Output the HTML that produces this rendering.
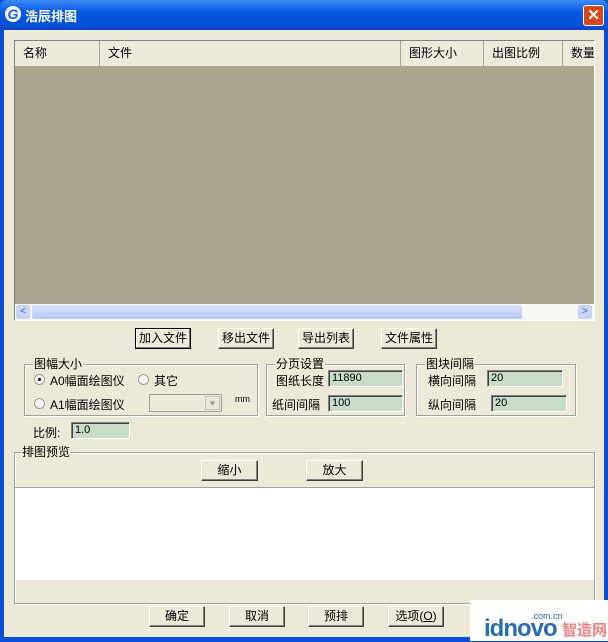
<!DOCTYPE html><html><head><meta charset="utf-8"><style>
*{margin:0;padding:0;box-sizing:border-box}
body{width:608px;height:641px;overflow:hidden;background:#0A4FD6;font-family:"Liberation Sans","Noto Sans CJK SC",sans-serif;font-size:12px;color:#000;position:relative}
.a{position:absolute}
.title{left:0;top:0;width:608px;height:30px;background:linear-gradient(#3A8CF8,#0858E0 40%,#0451DA 80%,#0A46C4);border-radius:7px 7px 0 0}
.client{left:4px;top:30px;width:600px;height:607px;background:#ECE9D8}
.btn{position:absolute;height:21px;border:1px solid #fff;border-right-color:#404040;border-bottom-color:#404040;box-shadow:inset -1px -1px 0 #808080;background:#ECE9D8;text-align:center;line-height:19px;font-size:12px}
.grp{position:absolute;border:1px solid #A0A0A0;box-shadow:1px 1px 0 #fff,inset 1px 1px 0 #fff}
.lg{position:absolute;top:-8px;left:8px;background:#ECE9D8;padding:0 1px;line-height:14px}
.inp{position:absolute;height:17px;background:#C8DCC8;border:1px solid #808080;border-right-color:#fff;border-bottom-color:#fff;box-shadow:inset 1px 1px 0 #404040;font-family:"Liberation Sans",sans-serif;font-size:11px;line-height:15px;padding-left:3px}
.rad{position:absolute;width:11px;height:11px;border-radius:50%;background:#f4f4f0;border:1px solid #9a9a9a}
.hd{position:absolute;top:0;height:25px;line-height:25px;padding-left:8px;border-right:1px solid #A8A48E;background:#EBEADB}
</style></head><body>
<div class="a title"></div>
<div class="a" style="left:5px;top:6px;width:16px;height:16px;border-radius:50%;background:#fff;color:#1060e0;font-weight:bold;font-style:italic;font-size:14px;line-height:16px;text-align:center">G</div>
<div class="a" style="left:25px;top:6px;color:#fff;font-weight:bold;font-size:13px">浩辰排图</div>
<div class="a" style="left:583px;top:5px;width:21px;height:21px;background:#D5481E;border:1px solid #fff;border-radius:3px;color:#fff;font-weight:bold;font-size:15px;text-align:center;line-height:19px">✕</div>
<div class="a client"></div>
<div class="a" style="left:14px;top:40px;width:581px;height:281px;border:1px solid #808080;border-right-color:#fff;border-bottom-color:#fff;background:#A8A48E;overflow:hidden">
<div class="hd" style="left:0;width:85px">名称</div>
<div class="hd" style="left:85px;width:301px">文件</div>
<div class="hd" style="left:386px;width:83px">图形大小</div>
<div class="hd" style="left:469px;width:79px">出图比例</div>
<div class="hd" style="left:548px;width:40px">数量</div>
<div class="a" style="left:0;top:263px;width:579px;height:16px;background:#F8F8F4">
<div class="a" style="left:1px;top:1px;width:14px;height:14px;background:#C8D4F8;border-radius:2px;color:#4d6185;font-size:10px;text-align:center;line-height:14px">&lt;</div>
<div class="a" style="left:17px;top:1px;width:490px;height:14px;background:linear-gradient(#D8E0FC,#B8C8F8);border-radius:2px"></div>
<div class="a" style="left:563px;top:1px;width:14px;height:14px;background:#C8D4F8;border-radius:2px;color:#4d6185;font-size:10px;text-align:center;line-height:14px">&gt;</div>
</div></div>
<div class="btn" style="left:135px;top:328px;width:56px;border:1px solid #000;box-shadow:inset -1px -1px 0 #808080,inset 1px 1px 0 #fff">加入文件</div>
<div class="btn" style="left:218px;top:328px;width:56px">移出文件</div>
<div class="btn" style="left:298px;top:328px;width:56px">导出列表</div>
<div class="btn" style="left:381px;top:328px;width:56px">文件属性</div>
<div class="grp" style="left:24px;top:364px;width:234px;height:52px"><span class="lg">图幅大小</span></div>
<div class="rad" style="left:34px;top:374px"><div class="a" style="left:3px;top:3px;width:3px;height:3px;background:#000;border-radius:50%"></div></div>
<div class="a" style="left:50px;top:372px">A0幅面绘图仪</div>
<div class="rad" style="left:138px;top:374px"></div>
<div class="a" style="left:154px;top:372px">其它</div>
<div class="rad" style="left:34px;top:398px"></div>
<div class="a" style="left:50px;top:396px">A1幅面绘图仪</div>
<div class="a" style="left:149px;top:394px;width:73px;height:18px;border:1px solid #A0A0A0;background:#ECE9D8"><div class="a" style="right:1px;top:1px;width:15px;height:14px;border:1px solid #c0c0c0;color:#999;font-size:8px;text-align:center;line-height:14px">▼</div></div>
<div class="a" style="left:235px;top:394px;font-size:9px">mm</div>
<div class="grp" style="left:266px;top:364px;width:139px;height:52px"><span class="lg">分页设置</span></div>
<div class="a" style="left:276px;top:372px">图纸长度</div>
<div class="inp" style="left:328px;top:370px;width:75px">11890</div>
<div class="a" style="left:272px;top:396px">纸间间隔</div>
<div class="inp" style="left:328px;top:395px;width:75px">100</div>
<div class="grp" style="left:416px;top:364px;width:160px;height:52px"><span class="lg">图块间隔</span></div>
<div class="a" style="left:428px;top:372px">横向间隔</div>
<div class="inp" style="left:487px;top:370px;width:76px">20</div>
<div class="a" style="left:428px;top:396px">纵向间隔</div>
<div class="inp" style="left:491px;top:395px;width:76px">20</div>
<div class="a" style="left:33px;top:424px">比例:</div>
<div class="inp" style="left:71px;top:422px;width:59px">1.0</div>
<div class="grp" style="left:14px;top:452px;width:581px;height:152px"><span class="lg" style="left:6px">排图预览</span></div>
<div class="btn" style="left:201px;top:460px;width:57px">缩小</div>
<div class="btn" style="left:306px;top:460px;width:57px">放大</div>
<div class="a" style="left:15px;top:487px;width:579px;height:93px;background:#fff;border-top:1px solid #A0A0A0"></div>
<div class="btn" style="left:149px;top:606px;width:56px">确定</div>
<div class="btn" style="left:229px;top:606px;width:56px">取消</div>
<div class="btn" style="left:308px;top:606px;width:56px">预排</div>
<div class="btn" style="left:388px;top:606px;width:56px">选项(<u>O</u>)</div>
<div class="a" style="left:470px;top:600px;width:138px;height:41px;background:#fff"></div>
<div class="a" style="left:531px;top:611px;font-size:9px;color:#2060a0">.com.cn</div>
<div class="a" style="left:484px;top:616px;font-size:24px;font-weight:bold;color:#2a6cb0;line-height:25px;letter-spacing:-1px">idnovo</div>
<div class="a" style="left:562px;top:622px;font-size:15px;font-weight:bold;color:#f08080;line-height:18px">智造网</div>
</body></html>
